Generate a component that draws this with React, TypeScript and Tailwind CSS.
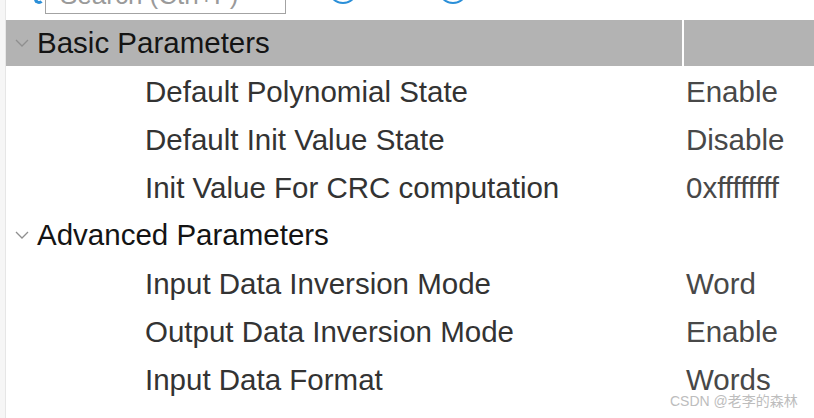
import React from "react";

const Chevron = () => (
  <svg width="14" height="8" viewBox="0 0 14 8" className="shrink-0">
    <polyline points="1,1 7,7 13,1" fill="none" stroke="#8f8f8f" strokeWidth="1.3" />
  </svg>
);

type Row = { label: string; value: string };

const Section = ({ title, rows, highlighted }: { title: string; rows: Row[]; highlighted?: boolean }) => (
  <div className="flex flex-col">
    <div className="h-[48px] flex flex-col">
      <div className="h-[46px] flex">
        <div className={`w-[676px] flex items-center ${highlighted ? "bg-[#b3b3b3]" : ""}`}>
          <div className="w-[31px] flex justify-center pl-[1px]">
            <Chevron />
          </div>
          <span className="text-[29.5px] text-[#141414] leading-none">{title}</span>
        </div>
        <div className="w-[2px]" />
        <div className={`flex-1 ${highlighted ? "bg-[#b3b3b3]" : ""}`} />
      </div>
    </div>
    {rows.map((r) => (
      <div key={r.label} className="h-[48px] flex items-center">
        <span className="w-[678px] shrink-0 pl-[139px] text-[29.5px] leading-none text-[#333333] whitespace-nowrap">{r.label}</span>
        <span className="pl-[2px] text-[29.5px] leading-none text-[#484848] whitespace-nowrap">{r.value}</span>
      </div>
    ))}
  </div>
);

export default function App() {
  return (
    <div
      className="w-[814px] h-[418px] bg-white flex overflow-hidden relative"
      style={{ fontFamily: '"Liberation Sans", Arial, "Noto Sans CJK SC", sans-serif' }}
    >
      <div className="w-[5px] bg-[#f6f6f6]" />
      <div className="w-[1px] bg-[#e6e6e6]" />
      <div className="flex-1 flex flex-col">
        <div className="h-[20px] relative flex items-start">
          <div className="ml-[39px] h-[14px] w-[241px] border border-[#a3a3a3] border-t-0 overflow-hidden relative">
            <span className="absolute left-[14px] top-[-18px] text-[26px] text-[#9a9a9a] leading-none whitespace-nowrap">
              Search (Ctrl+F)
            </span>
          </div>
          <div className="absolute left-[28px] top-[-6px] w-[10px] h-[10px] rounded-full border-[3px] border-[#2b8fd8] border-r-transparent border-t-transparent" />
          <div className="absolute left-[322px] top-[-26px] w-[30px] h-[30px] rounded-full border-[2px] border-[#2b8fd8]" />
          <div className="absolute left-[432px] top-[-26px] w-[30px] h-[30px] rounded-full border-[2px] border-[#2b8fd8]" />
        </div>
        <Section
          title="Basic Parameters"
          highlighted
          rows={[
            { label: "Default Polynomial State", value: "Enable" },
            { label: "Default Init Value State", value: "Disable" },
            { label: "Init Value For CRC computation", value: "0xffffffff" },
          ]}
        />
        <Section
          title="Advanced Parameters"
          rows={[
            { label: "Input Data Inversion Mode", value: "Word" },
            { label: "Output Data Inversion Mode", value: "Enable" },
            { label: "Input Data Format", value: "Words" },
          ]}
        />
      </div>
      <div className="absolute left-[670px] top-[394px] text-[14px] leading-none text-[#bdbdbd] whitespace-nowrap">
        CSDN @老李的森林
      </div>
    </div>
  );
}
